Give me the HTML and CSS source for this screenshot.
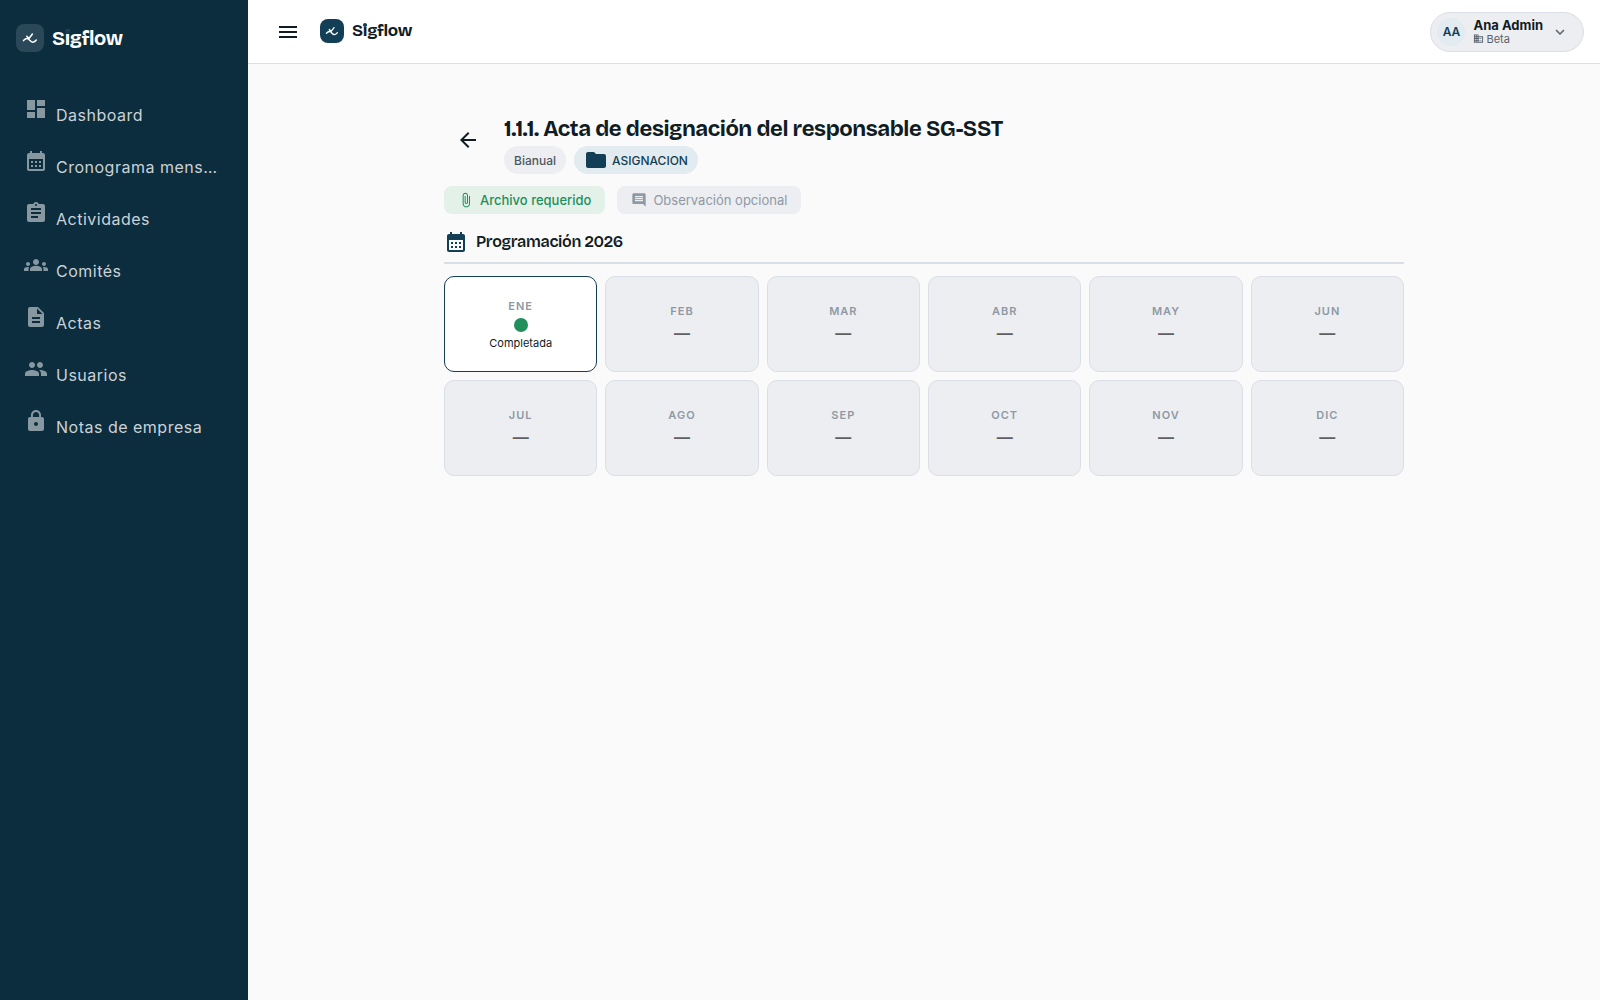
FILE: index.html
```html
<!DOCTYPE html>
<html lang="es">
<head>
<meta charset="utf-8">
<meta name="viewport" content="width=device-width, initial-scale=1">
<title>Sigflow</title>
<link rel="stylesheet" href="styles.css">
</head>
<body>
<svg class="sprite" aria-hidden="true">
  <symbol id="mark" viewBox="0 0 28 28"><path d="M7.500 16.600c1.500-1.600 3.600-2.700 5.200-1.300 1.400 1.300 2.300 3 4.200 2.900 1.700-.1 2.600-1.100 3.400-2.200M10.800 12.200l2.200 2.300 3.400-4.500" fill="none" stroke="currentColor" stroke-width="1.500" stroke-linecap="round" stroke-linejoin="round"/></symbol>
  <symbol id="calendar" viewBox="0 0 24 24"><path d="M19 4h-1V2h-2v2H8V2H6v2H5c-1.110 0-1.990.9-1.990 2L3 20c0 1.100.89 2 2 2h14c1.100 0 2-.9 2-2V6c0-1.100-.9-2-2-2zm0 16H5V10h14v10zM9 14H7v-2h2v2zm4 0h-2v-2h2v2zm4 0h-2v-2h2v2zm-8 4H7v-2h2v2zm4 0h-2v-2h2v2zm4 0h-2v-2h2v2z"/></symbol>
</svg>
<div class="shell">
  <aside class="sidebar">
    <a class="brand brand-side" href="#">
      <span class="mark"><svg viewBox="0 0 28 28"><use href="#mark"/></svg></span>
      <span class="wordmark">S<span class="dotted">i</span>gflow</span>
    </a>
    <nav class="nav" aria-label="Principal">
      <a href="#"><svg viewBox="0 0 24 24"><path d="M3 13h8V3H3v10zm0 8h8v-6H3v6zm10 0h8V11h-8v10zm0-18v6h8V3h-8z"/></svg><span>Dashboard</span></a>
      <a href="#"><svg viewBox="0 0 24 24"><use href="#calendar"/></svg><span>Cronograma mensual</span></a>
      <a href="#"><svg viewBox="0 0 24 24"><path d="M19 3h-4.180C14.400 1.840 13.300 1 12 1c-1.300 0-2.400.84-2.820 2H5c-1.100 0-2 .9-2 2v14c0 1.100.9 2 2 2h14c1.100 0 2-.9 2-2V5c0-1.100-.9-2-2-2zm-7 0c.55 0 1 .45 1 1s-.45 1-1 1-1-.45-1-1 .45-1 1-1zm2 14H7v-2h7v2zm3-4H7v-2h10v2zm0-4H7V7h10v2z"/></svg><span>Actividades</span></a>
      <a href="#"><svg viewBox="0 0 24 24"><path d="M12 12.750c1.630 0 3.070.39 4.240.9 1.080.48 1.760 1.560 1.760 2.730V18H6v-1.610c0-1.180.68-2.260 1.760-2.730 1.170-.52 2.610-.91 4.240-.91zM4 13c1.100 0 2-.9 2-2s-.9-2-2-2-2 .9-2 2 .9 2 2 2zm1.130 1.100C4.760 14.040 4.390 14 4 14c-.99 0-1.930.21-2.780.58C.48 14.900 0 15.620 0 16.430V18h4.500v-1.610c0-.83.23-1.610.63-2.290zM20 13c1.100 0 2-.9 2-2s-.9-2-2-2-2 .9-2 2 .9 2 2 2zm4 3.430c0-.81-.48-1.530-1.220-1.850-.85-.37-1.790-.58-2.780-.58-.39 0-.76.04-1.130.1.400.68.63 1.460.63 2.290V18H24v-1.570zM12 6c1.660 0 3 1.340 3 3s-1.340 3-3 3-3-1.340-3-3 1.340-3 3-3z"/></svg><span>Comités</span></a>
      <a href="#"><svg viewBox="0 0 24 24"><path d="M14 2H6c-1.100 0-1.990.9-1.990 2L4 20c0 1.100.89 2 1.990 2H18c1.100 0 2-.9 2-2V8l-6-6zm2 16H8v-2h8v2zm0-4H8v-2h8v2zm-3-5V3.500L18.500 9H13z"/></svg><span>Actas</span></a>
      <a href="#"><svg viewBox="0 0 24 24"><path d="M16 11c1.660 0 2.990-1.340 2.990-3S17.660 5 16 5s-3 1.340-3 3 1.340 3 3 3zm-8 0c1.660 0 2.990-1.340 2.990-3S9.660 5 8 5 5 6.340 5 8s1.340 3 3 3zm0 2c-2.330 0-7 1.170-7 3.500V19h14v-2.500C15 14.170 10.330 13 8 13zm8 0c-.29 0-.62.02-.97.05 1.160.84 1.970 1.970 1.970 3.450V19h6v-2.500c0-2.330-4.670-3.500-7-3.500z"/></svg><span>Usuarios</span></a>
      <a href="#"><svg viewBox="0 0 24 24"><path d="M18 8h-1V6c0-2.760-2.240-5-5-5S7 3.240 7 6v2H6c-1.100 0-2 .9-2 2v10c0 1.100.9 2 2 2h12c1.100 0 2-.9 2-2V10c0-1.100-.9-2-2-2zm-6 9c-1.100 0-2-.9-2-2s.9-2 2-2 2 .9 2 2-.9 2-2 2zm3.100-9H8.900V6c0-1.710 1.390-3.100 3.100-3.100s3.100 1.390 3.100 3.100v2z"/></svg><span>Notas de empresa</span></a>
    </nav>
  </aside>
  <div class="page">
    <header class="topbar">
      <button class="icon-button" type="button" aria-label="Menú"><svg viewBox="0 0 24 24"><path d="M3 18h18v-2H3v2zm0-5h18v-2H3v2zm0-7v2h18V6H3z"/></svg></button>
      <a class="brand brand-top" href="#">
        <span class="mark"><svg viewBox="0 0 28 28"><use href="#mark"/></svg></span>
        <span class="wordmark">S<span class="dotted">i</span>gflow</span>
      </a>
      <button class="user" type="button">
        <span class="avatar">AA</span>
        <span class="user-text">
          <span class="user-name">Ana Admin</span>
          <span class="user-org"><svg viewBox="0 0 24 24"><path d="M12 7V3H2v18h20V7H12zM6 19H4v-2h2v2zm0-4H4v-2h2v2zm0-4H4V9h2v2zm0-4H4V5h2v2zm4 12H8v-2h2v2zm0-4H8v-2h2v2zm0-4H8V9h2v2zm0-4H8V5h2v2zm10 12h-8v-2h2v-2h-2v-2h2v-2h-2V9h8v10zm-2-8h-2v2h2v-2zm0 4h-2v2h2v-2z"/></svg>Beta</span>
        </span>
        <svg class="chevron" viewBox="0 0 24 24"><path d="M16.590 8.590L12 13.170 7.410 8.590 6 10l6 6 6-6z"/></svg>
      </button>
    </header>
    <main class="content">
      <div class="heading">
        <button class="icon-button" type="button" aria-label="Volver"><svg viewBox="0 0 24 24"><path d="M20 11H7.830l5.590-5.590L12 4l-8 8 8 8 1.410-1.410L7.830 13H20v-2z"/></svg></button>
        <div>
          <h1>1.1.1. Acta de designación del responsable SG-SST</h1>
          <div class="tags">
            <span class="tag">Bianual</span>
            <span class="tag tag-folder"><svg viewBox="0 0 24 24"><path d="M10 4H4c-1.100 0-1.990.9-1.990 2L2 18c0 1.100.9 2 2 2h16c1.100 0 2-.9 2-2V8c0-1.100-.9-2-2-2h-8l-2-2z"/></svg>ASIGNACION</span>
          </div>
        </div>
      </div>
      <div class="needs">
        <span class="need need-required"><svg viewBox="0 0 24 24"><path d="M16.500 6v11.500c0 2.210-1.790 4-4 4s-4-1.790-4-4V5c0-1.380 1.120-2.500 2.500-2.500s2.500 1.120 2.500 2.500v10.500c0 .55-.45 1-1 1s-1-.45-1-1V6H10v9.500c0 1.380 1.120 2.500 2.500 2.500s2.500-1.120 2.500-2.500V5c0-2.210-1.790-4-4-4S7 2.790 7 5v12.500c0 3.040 2.460 5.500 5.500 5.500s5.500-2.460 5.500-5.500V6h-1.500z"/></svg>Archivo requerido</span>
        <span class="need"><svg viewBox="0 0 24 24"><path d="M21.990 4c0-1.100-.89-2-1.990-2H4c-1.100 0-2 .9-2 2v12c0 1.100.9 2 2 2h14l4 4-.01-18zM18 14H6v-2h12v2zm0-3H6V9h12v2zm0-3H6V6h12v2z"/></svg>Observación opcional</span>
      </div>
      <h2><svg viewBox="0 0 24 24"><use href="#calendar"/></svg>Programación 2026</h2>
      <div class="months">
        <button class="month month-done" type="button"><span class="month-name">ENE</span><span class="dot"></span><span class="status">Completada</span></button>
        <div class="month"><span class="month-name">FEB</span><span class="dash">—</span></div>
        <div class="month"><span class="month-name">MAR</span><span class="dash">—</span></div>
        <div class="month"><span class="month-name">ABR</span><span class="dash">—</span></div>
        <div class="month"><span class="month-name">MAY</span><span class="dash">—</span></div>
        <div class="month"><span class="month-name">JUN</span><span class="dash">—</span></div>
        <div class="month"><span class="month-name">JUL</span><span class="dash">—</span></div>
        <div class="month"><span class="month-name">AGO</span><span class="dash">—</span></div>
        <div class="month"><span class="month-name">SEP</span><span class="dash">—</span></div>
        <div class="month"><span class="month-name">OCT</span><span class="dash">—</span></div>
        <div class="month"><span class="month-name">NOV</span><span class="dash">—</span></div>
        <div class="month"><span class="month-name">DIC</span><span class="dash">—</span></div>
      </div>
    </main>
  </div>
</div>
</body>
</html>
```
FILE: styles.css
```css
* { box-sizing: border-box; }
body {
  margin: 0;
  font-family: Inter, "Liberation Sans", sans-serif;
  color: #101c24;
  background: #fafafa;
}
a { color: inherit; text-decoration: none; }
button { font: inherit; color: inherit; border: 0; padding: 0; background: none; cursor: pointer; }
svg { display: block; fill: currentColor; flex: none; }
.sprite { position: absolute; width: 0; height: 0; }

.shell { display: flex; min-height: 100vh; }
.sidebar { width: 248px; flex: none; background: #0c2d3e; color: #fff; }
.page { flex: 1; min-width: 0; }

.brand {
  display: flex;
  align-items: center;
  gap: 8px;
  font-family: "Bricolage Grotesque", Inter, sans-serif;
  font-weight: 700;
  letter-spacing: -0.02em;
}
.mark { color: #fff; }
.mark svg { width: 100%; height: 100%; }
.dotted { position: relative; }
.dotted::after {
  content: "";
  position: absolute;
  left: 50%;
  top: 3px;
  width: 4px;
  height: 4px;
  margin-left: -2px;
  border-radius: 50%;
  background: #123f55;
}
.brand-side { padding: 24px 16px; font-size: 20px; line-height: 28px; }
.brand-side .mark { width: 28px; height: 28px; border-radius: 8px; background: #2b4858; }
.brand-side .dotted::after { width: 5px; height: 5px; }
.brand-top { padding-bottom: 2px; font-size: 17px; line-height: 24px; }
.brand-top .mark { width: 24px; height: 24px; border-radius: 8px; background: #123f55; }

.nav { display: grid; grid-template-columns: minmax(0, 1fr); gap: 4px; padding: 13px 8px; }
.nav a { display: flex; gap: 8px; height: 48px; padding: 8px 16px; color: #cbd2d7; }
.nav svg { width: 24px; height: 24px; color: #8798a1; }
.nav span {
  padding-top: 6px;
  font-size: 16px;
  line-height: 24px;
  letter-spacing: 0.5px;
  overflow: hidden;
  text-overflow: ellipsis;
  white-space: nowrap;
}

.topbar { display: flex; align-items: center; height: 64px; padding: 0 16px; background: #fff; border-bottom: 1px solid #dcdfe6; }
.icon-button { display: grid; place-items: center; width: 48px; height: 48px; flex: none; }
.icon-button svg { width: 24px; height: 24px; }
.topbar .brand { margin-left: 8px; }
.user {
  display: flex;
  align-items: center;
  gap: 8px;
  height: 40px;
  margin-left: auto;
  padding: 0 14px 0 6px;
  border: 1px solid #dadee6;
  border-radius: 20px;
  background: #edeef2;
  text-align: left;
}
.avatar { display: grid; place-items: center; width: 28px; height: 28px; border-radius: 50%; background: #e2ebf0; color: #123f55; font-size: 12px; font-weight: 600; }
.user-text { display: grid; }
.user-name { font-size: 13px; line-height: 14px; font-weight: 700; }
.user-org { display: flex; align-items: center; gap: 2px; font-size: 11px; line-height: 14px; color: #58626a; }
.user-org svg { width: 11px; height: 11px; }
.chevron { width: 18px; height: 18px; color: #58626a; }

.content { width: 100%; max-width: 1008px; margin: 0 auto; padding: 48px 24px; }
.heading { display: flex; gap: 12px; }
.heading .icon-button { margin-top: 4px; }
h1, h2 { margin: 0; font-family: "Bricolage Grotesque", Inter, sans-serif; font-weight: 600; }
h1 { font-size: 22px; line-height: 34px; font-weight: 700; letter-spacing: -0.02em; }
.tags { display: flex; gap: 8px; }
.tag { display: flex; align-items: center; gap: 4px; height: 28px; padding: 0 10px; border-radius: 14px; background: #edeef2; color: #4c5962; font-size: 12px; font-weight: 500; }
.tag-folder { background: #e2ebf0; color: #123f55; }
.tag-folder svg { width: 24px; height: 24px; }
.needs { display: flex; gap: 12px; margin-top: 12px; }
.need { display: flex; align-items: center; gap: 6px; height: 28px; padding: 0 14px; border-radius: 8px; background: #edeef2; color: #8d99a4; font-size: 13px; }
.need svg { width: 16px; height: 16px; }
.need-required { background: #e3f1e9; color: #1f8f5b; font-weight: 500; }
h2 {
  display: flex;
  align-items: center;
  gap: 8px;
  margin: 14px 0 12px;
  padding-bottom: 6px;
  border-bottom: 2px solid #dadee6;
  font-size: 16px;
  line-height: 28px;
  letter-spacing: -0.02em;
}
h2 svg { width: 24px; height: 24px; color: #123f55; }

.months { display: grid; grid-template-columns: repeat(6, 1fr); gap: 8px; }
.month {
  display: flex;
  flex-direction: column;
  align-items: center;
  justify-content: center;
  gap: 2px;
  height: 96px;
  border: 1px solid #dadee6;
  border-radius: 10px;
  background: #edeef2;
}
.month-done { gap: 4px; border-color: #123f55; background: #fff; }
.month-name { font-size: 11px; line-height: 16px; font-weight: 600; letter-spacing: 1px; color: #8d99a4; }
.dot { width: 14px; height: 14px; border-radius: 50%; background: #1f8f5b; }
.status { font-size: 11px; line-height: 14px; }
.dash { font-size: 16px; line-height: 24px; font-weight: 600; color: #5f6063; }
```
